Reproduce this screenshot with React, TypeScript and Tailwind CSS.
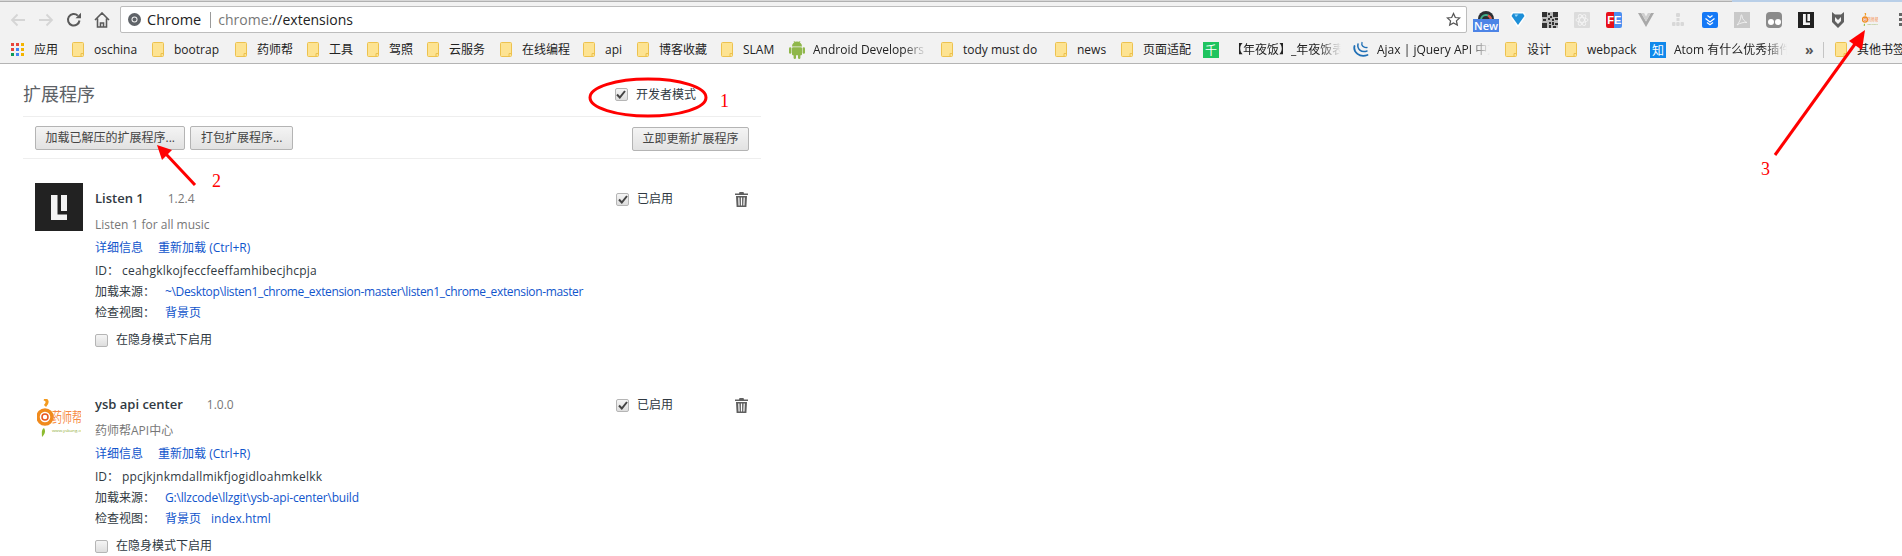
import React from 'react';

const FONT = "font-['Open_Sans','Noto_Sans_CJK_SC',sans-serif]";

function FolderIcon() {
  return (
    <svg width="12" height="15" viewBox="0 0 12 15" className="shrink-0">
      <path d="M1.5.5h9a1 1 0 0 1 1 1v12a1 1 0 0 1-1 1h-9a1 1 0 0 1-1-1v-12a1 1 0 0 1 1-1z" fill="#fde392" stroke="#edc24f" />
      <path d="M9 14.5v-3h2.5" fill="none" stroke="#edc24f" />
    </svg>
  );
}

function AppsIcon() {
  const colors = ['#e8453c', '#e8453c', '#f4b400', '#e8453c', '#4285f4', '#f4b400', '#0f9d58', '#4285f4', '#f4b400'];
  return (
    <div className="grid grid-cols-3 gap-[2px] w-[13px] shrink-0">
      {colors.map((c, i) => (
        <div key={i} className="w-[3px] h-[3px]" style={{ backgroundColor: c }} />
      ))}
    </div>
  );
}

function AndroidIcon() {
  return (
    <svg width="16" height="19" viewBox="0 0 16 19" className="shrink-0" fill="#8fb74a">
      <path d="M3 6.5a5 5 0 0 1 10 0z" />
      <rect x="3" y="7.2" width="10" height="8" rx="1" />
      <rect x="0" y="7.2" width="2.4" height="6.5" rx="1.2" />
      <rect x="13.6" y="7.2" width="2.4" height="6.5" rx="1.2" />
      <rect x="4.6" y="14" width="2.4" height="5" rx="1.2" />
      <rect x="9" y="14" width="2.4" height="5" rx="1.2" />
      <path d="M5 1l1 2M11 1l-1 2" stroke="#8fb74a" strokeWidth=".8" />
    </svg>
  );
}

function NianYeFanIcon() {
  return (
    <div className="w-4 h-4 bg-[#1fc45f] shrink-0 flex items-center justify-center text-white text-[12px] leading-none font-['Noto_Sans_CJK_SC',sans-serif]">
      千
    </div>
  );
}

function JQueryIcon() {
  return (
    <svg width="16" height="17" viewBox="0 0 16 17" className="shrink-0" fill="none" stroke="#1f6fb5" strokeLinecap="round">
      <path d="M1.5 5c-1.5 6 5 12 13 9" strokeWidth="1.8" />
      <path d="M5 3c-1 5 3 9 9 7" strokeWidth="1.5" />
      <path d="M9 1.5c-1 3 1.5 5.500 5 5" strokeWidth="1.3" />
    </svg>
  );
}

function ZhihuIcon() {
  return (
    <div className="w-4 h-4 bg-[#0f88eb] shrink-0 flex items-center justify-center text-white text-[12px] leading-none font-['Noto_Sans_CJK_SC',sans-serif]">
      知
    </div>
  );
}

const BOOKMARKS: { label: string; w: string; icon?: React.ReactNode; gap?: string; fade?: string }[] = [
  { label: '应用', w: 'w-[61px]', icon: <AppsIcon />, gap: 'gap-[10px]' },
  { label: 'oschina', w: 'w-[80px]' },
  { label: 'bootrap', w: 'w-[83px]' },
  { label: '药师帮', w: 'w-[72px]' },
  { label: '工具', w: 'w-[60px]' },
  { label: '驾照', w: 'w-[60px]' },
  { label: '云服务', w: 'w-[73px]' },
  { label: '在线编程', w: 'w-[83px]' },
  { label: 'api', w: 'w-[54px]' },
  { label: '博客收藏', w: 'w-[84px]' },
  { label: 'SLAM', w: 'w-[68px]' },
  { label: 'Android Developers', w: 'w-[152px]', icon: <AndroidIcon />, gap: 'gap-2', fade: 'w-[114px]' },
  { label: 'tody must do', w: 'w-[114px]' },
  { label: 'news', w: 'w-[66px]' },
  { label: '页面适配', w: 'w-[82px]' },
  { label: '【年夜饭】_年夜饭表单', w: 'w-[150px]', icon: <NianYeFanIcon />, gap: 'gap-3', fade: 'w-[110px]' },
  { label: 'Ajax | jQuery API 中文网', w: 'w-[152px]', icon: <JQueryIcon />, gap: 'gap-2', fade: 'w-[113px]' },
  { label: '设计', w: 'w-[60px]' },
  { label: 'webpack', w: 'w-[85px]' },
  { label: 'Atom 有什么优秀插件', w: 'w-[155px]', icon: <ZhihuIcon />, gap: 'gap-2', fade: 'w-[113px]' },
];

function Bookmark({ label, w, icon, gap, fade }: (typeof BOOKMARKS)[number]) {
  return (
    <div className={`flex items-center shrink-0 ${w} ${gap ?? 'gap-[10px]'}`}>
      {icon ?? <FolderIcon />}
      {fade ? (
        <span className={`${fade} overflow-hidden whitespace-nowrap [mask-image:linear-gradient(to_right,black_80%,transparent)]`}>{label}</span>
      ) : (
        <span className="whitespace-nowrap">{label}</span>
      )}
    </div>
  );
}

function ListenMark({ width }: { width: number }) {
  return (
    <svg width={width} viewBox="0 0 16 25" fill="#f4f4f4">
      <path d="M0 0h6.500v19.500H16V25H0z" />
      <path d="M10 0h6v16h-6z" />
    </svg>
  );
}

function YsbLogo({ width }: { width: number }) {
  return (
    <svg width={width} viewBox="0 0 44 38">
      <path d="M7 0c4 1 4 4 1 7" fill="none" stroke="#f39a1f" strokeWidth="3" />
      <circle cx="8" cy="18" r="7" fill="none" stroke="#f08a1d" strokeWidth="3.500" />
      <circle cx="8" cy="18" r="3" fill="none" stroke="#e8541e" strokeWidth="1.500" />
      <path d="M7 29c2 3 1 6-2 9 0-4-1-7 2-9z" fill="#8dbb2f" />
      <text
        transform="translate(15 23) scale(1 1.400)"
        fontSize="10"
        fill="#f68b45"
        fontFamily="'Noto Sans CJK SC', sans-serif"
      >
        药师帮
      </text>
      <text x="15" y="33" fontSize="4.300" fill="#8fae3a" fontFamily="'Open Sans', sans-serif">
        www.ysbang.cn
      </text>
    </svg>
  );
}

function ExtIcons() {
  return (
    <div className="flex items-center shrink-0 ml-[3px]">
      {/* new */}
      <div className="relative w-8 h-[27px] flex items-center justify-center">
        <svg width="16" height="16" viewBox="0 0 16 16" className="-mt-[2px]">
          <circle cx="8" cy="8" r="8" fill="#2b2f33" />
          <path d="M3 9a5 5 0 0 1 10 0" fill="none" stroke="#3fb28a" strokeWidth="2" />
          <path d="M10 4.500a5 5 0 0 1 3 4.500" fill="none" stroke="#e0574c" strokeWidth="2" />
        </svg>
        <span className="absolute left-[3px] top-[13px] w-[26px] h-[13px] bg-[#4d84e6] text-white text-[11px] leading-[13px] text-center font-semibold">New</span>
      </div>
      {/* diamond */}
      <div className="w-8 flex justify-center">
        <svg width="16" height="17" viewBox="0 0 16 17">
          <path d="M2 1h12l2 4-8 12L0 5z" fill="#fff" />
          <path d="M3 2.500h10l1.500 2.500L8 14 1.500 5z" fill="#1d8fd8" />
          <path d="M4.500 3.500h4L6 6z" fill="#9ad8f8" />
        </svg>
      </div>
      {/* qr */}
      <div className="w-8 flex justify-center">
        <svg width="16" height="16" viewBox="0 0 16 16" fill="#333" shapeRendering="crispEdges">
          <rect width="16" height="16" fill="#bbb" />
          <path d="M0 0h5v5H0zM11 0h5v5h-5zM0 11h5v5H0zM6 1h2v2H6zM8 4h2v2H8zM6 6h2v2H6zM1 7h3v2H1zM10 7h2v2h-2zM13 6h3v2h-3zM7 10h2v2H7zM10 10h2v3h-2zM13 11h3v2h-3zM7 13h2v3H7zM11 14h3v2h-3z" />
        </svg>
      </div>
      {/* react */}
      <div className="w-8 flex justify-center">
        <div className="w-4 h-4 bg-[#dcdcdc] rounded-[1px] flex items-center justify-center">
          <svg width="14" height="14" viewBox="0 0 14 14" fill="none" stroke="#f4f4f4" strokeWidth=".9">
            <ellipse cx="7" cy="7" rx="6" ry="2.400" />
            <ellipse cx="7" cy="7" rx="6" ry="2.400" transform="rotate(60 7 7)" />
            <ellipse cx="7" cy="7" rx="6" ry="2.400" transform="rotate(120 7 7)" />
          </svg>
        </div>
      </div>
      {/* fe */}
      <div className="w-8 flex justify-center">
        <div className="w-4 h-4 rounded-[2px] overflow-hidden flex text-white text-[11px] leading-4 font-bold font-['Liberation_Sans',sans-serif]">
          <span className="w-2 bg-[#e8101a] text-right">F</span>
          <span className="w-2 bg-[#4a8ef0]">E</span>
        </div>
      </div>
      {/* vue */}
      <div className="w-8 flex justify-center">
        <svg width="16" height="14" viewBox="0 0 16 14">
          <path d="M0 0h3.200L8 8.500 12.800 0H16L8 14z" fill="#a9a9a9" />
          <path d="M3.200 0h2.900L8 3.400 9.900 0h2.900L8 8.500z" fill="#cfcfcf" />
        </svg>
      </div>
      {/* tree */}
      <div className="w-8 flex justify-center">
        <svg width="12" height="14" viewBox="0 0 12 14" fill="#d8d8d8">
          <rect x="4" y="0" width="4" height="4" rx="1" />
          <rect x="4.500" y="5" width="3" height="3" />
          <rect x="0" y="9" width="3.500" height="4" rx="1" />
          <rect x="4.200" y="9" width="3.500" height="4" rx="1" />
          <rect x="8.500" y="9" width="3.500" height="4" rx="1" />
        </svg>
      </div>
      {/* pocket */}
      <div className="w-8 flex justify-center">
        <div className="w-4 h-4 bg-[#1579f6] rounded-[2px] flex items-center justify-center">
          <svg width="12" height="12" viewBox="0 0 12 12" fill="none" stroke="#fff" strokeWidth="1.200">
            <path d="M3.500 1.500L6 3.500l2.500-2M1.500 4.500L6 8l4.500-3.500M3 8.500L6 10.800 9 8.500" />
          </svg>
        </div>
      </div>
      {/* pdf */}
      <div className="w-8 flex justify-center">
        <div className="w-4 h-4 bg-[#c9c9c9] flex items-center justify-center">
          <svg width="12" height="12" viewBox="0 0 12 12" fill="none" stroke="#efefef" strokeWidth="1">
            <path d="M1 11C3 9 5 5 5 1.500c0-1 1-1 1 .500 0 3 3 6 5 6.500-3-.5-7 .5-10 2.500z" />
          </svg>
        </div>
      </div>
      {/* ghostery */}
      <div className="w-8 flex justify-center">
        <div className="w-4 h-4 bg-[#8b8b8b] rounded-[4px] flex items-end justify-center gap-[1px] pb-[3px]">
          <span className="w-[6px] h-[6px] rounded-full bg-white" />
          <span className="w-[6px] h-[6px] rounded-full bg-white" />
        </div>
      </div>
      {/* listen 1 */}
      <div className="w-8 flex justify-center">
        <div className="w-4 h-4 bg-[#222222] flex items-center justify-center">
          <ListenMark width={7} />
        </div>
      </div>
      {/* shield */}
      <div className="w-8 flex justify-center">
        <svg width="14" height="16" viewBox="0 0 14 16">
          <path d="M1 0l3 2.500h6L13 0v10l-6 6-6-6z" fill="#606060" />
          <path d="M4 5l3 3 3-3v4l-3 3-3-3z" fill="#f2f2f2" />
        </svg>
      </div>
      {/* ysb */}
      <div className="w-8 flex justify-center">
        <YsbLogo width={16} />
      </div>
      {/* chrome menu, cut by the window edge */}
      <div className="ml-[13px] w-[3px] flex flex-col gap-[2px] shrink-0">
        <span className="h-[3px] bg-[#666]" />
        <span className="h-[3px] bg-[#666]" />
        <span className="h-[3px] bg-[#666]" />
      </div>
    </div>
  );
}

function Toolbar() {
  return (
    <div className="h-[63px] bg-[#f2f2f2] border-b border-[#b4b4b4] box-content relative">
      {/* tab strip edge */}
      <div className="h-[2px] flex">
        <div className="flex-1 border-b border-[#b0b0b0] bg-[#d8d8d8]" />
        <div className="w-[170px] bg-[#b9cfe8]" />
      </div>
      <div className="h-[34px] pt-[4px] flex items-start">
        <div className="w-[120px] h-[27px] flex items-center shrink-0 pl-[10px]">
          <svg width="16" height="14" viewBox="0 0 16 14" fill="none" stroke="#d5d5d5" strokeWidth="1.800">
            <path d="M15 7H2M7.500 1.500L2 7l5.500 5.500" />
          </svg>
          <svg width="16" height="14" viewBox="0 0 16 14" fill="none" stroke="#d5d5d5" strokeWidth="1.800" className="ml-3">
            <path d="M1 7h13M8.500 1.500L14 7l-5.500 5.500" />
          </svg>
          <svg width="16" height="16" viewBox="0 0 16 16" fill="none" stroke="#5a5a5a" strokeWidth="2" className="ml-3">
            <path d="M13.500 8.500A5.800 5.800 0 1 1 11.800 3.600" />
            <path d="M9.500 6.300h5.500V.8z" fill="#5a5a5a" stroke="none" />
          </svg>
          <svg width="16" height="16" viewBox="0 0 16 16" fill="none" stroke="#5a5a5a" strokeWidth="1.600" className="ml-3">
            <path d="M1 8l7-7 7 7M3.500 6.500V15h9V6.500M6.500 15v-4h3v4" />
          </svg>
        </div>
        <div className="w-[1347px] h-[27px] bg-white border border-[#bdbdbd] rounded-[2px] flex items-center shrink-0 pl-[7px] text-[14px]">
          <svg width="13" height="13" viewBox="0 0 13 13" className="shrink-0">
            <circle cx="6.500" cy="6.500" r="6.500" fill="#5f6368" />
            <circle cx="6.500" cy="6.500" r="3" fill="#f2f2f2" />
            <circle cx="6.500" cy="6.500" r="2" fill="#5f6368" />
          </svg>
          <span className="ml-[6px] text-[#222] text-[14.500px]">Chrome</span>
          <span className="ml-[9px] w-px h-[16px] bg-[#9a9a9a]" />
          <span className="ml-[7px] text-[#777]">chrome:<span className="text-[#222]">//extensions</span></span>
          <svg width="15" height="15" viewBox="0 0 24 24" fill="none" stroke="#555" strokeWidth="2" className="ml-auto mr-[5px]">
            <path d="M12 2.500l2.900 6.300 6.900.8-5.100 4.600 1.400 6.800-6.100-3.400-6.100 3.400 1.400-6.800L2.200 9.600l6.900-.8z" />
          </svg>
        </div>
        <ExtIcons />
      </div>
      <div className={`h-[27px] flex items-center pl-[11px] text-[12px] text-[#222] overflow-hidden ${FONT}`}>
        {BOOKMARKS.map((b) => (
          <Bookmark key={b.label} {...b} />
        ))}
        <span className="w-[18px] shrink-0 text-[#555] text-[14px] leading-none font-bold">»</span>
        <span className="w-px h-4 bg-[#c4c4c4] shrink-0" />
        <span className="ml-[11px] flex items-center gap-[10px] shrink-0">
          <FolderIcon />
          <span className="whitespace-nowrap">其他书签</span>
        </span>
      </div>
    </div>
  );
}

function Check({ checked }: { checked?: boolean }) {
  return (
    <span className="w-[13px] h-[13px] rounded-[2px] border border-[#b5b5b5] bg-gradient-to-b from-[#f5f5f5] to-[#dedede] shrink-0 flex items-center justify-center">
      {checked && (
        <svg width="10" height="9" viewBox="0 0 10 9" fill="none" stroke="#444" strokeWidth="2">
          <path d="M1 4.500l2.800 3L9 1" />
        </svg>
      )}
    </span>
  );
}

function TrashIcon() {
  return (
    <svg width="13" height="15" viewBox="0 0 13 15" fill="#5f5f5f">
      <path d="M4.500 0h4l.5 1.500h4V3H0V1.500h4z" />
      <path fillRule="evenodd" d="M1 4h11l-.6 11H1.600zM3.200 5.500l.3 8h1.200l-.3-8zm2.700 0v8h1.200v-8zm2.700 0l-.3 8h1.200l.3-8z" />
    </svg>
  );
}

function Button({ children }: { children: React.ReactNode }) {
  return (
    <button className="h-6 px-[9.500px] border border-[#b4b4b4] rounded-[2px] bg-gradient-to-b from-[#f4f4f4] to-[#e2e2e2] text-[12px] text-[#444] leading-none whitespace-nowrap">
      {children}
    </button>
  );
}

function Row({ children, className }: { children: React.ReactNode; className?: string }) {
  return <div className={`h-5 flex items-center whitespace-nowrap ${className ?? ''}`}>{children}</div>;
}

interface Ext {
  name: string;
  version: string;
  desc: string;
  id: string;
  source: string;
  sourceTracking: string;
  views: string[];
  icon: React.ReactNode;
}

const EXTENSIONS: Ext[] = [
  {
    name: 'Listen 1',
    version: '1.2.4',
    desc: 'Listen 1 for all music',
    id: 'ceahgklkojfeccfeeffamhibecjhcpja',
    source: '~\\Desktop\\listen1_chrome_extension-master\\listen1_chrome_extension-master',
    sourceTracking: 'tracking-[-0.35px]',
    views: ['背景页'],
    icon: (
      <div className="w-12 h-12 bg-[#222222] flex items-center justify-center">
        <ListenMark width={16} />
      </div>
    ),
  },
  {
    name: 'ysb api center',
    version: '1.0.0',
    desc: '药师帮API中心',
    id: 'ppcjkjnkmdallmikfjogidloahmkelkk',
    source: 'G:\\llzcode\\llzgit\\ysb-api-center\\build',
    sourceTracking: 'tracking-[-0.2px]',
    views: ['背景页', 'index.html'],
    icon: (
      <div className="w-12 h-12 flex items-start justify-center pt-[10px]">
        <YsbLogo width={44} />
      </div>
    ),
  },
];

function ExtensionItem({ ext }: { ext: Ext }) {
  return (
    <div className="flex h-[206px] pl-3">
      <div className="w-[60px] shrink-0">{ext.icon}</div>
      <div className="flex-1 pt-[6px] text-[12px] text-[#303942]">
        <Row>
          <span className="text-[13px] font-semibold">{ext.name}</span>
          <span className="ml-6 text-[#777]">{ext.version}</span>
        </Row>
        <Row className="mt-[6px] text-[#777]">{ext.desc}</Row>
        <Row className="mt-[3px] text-[#15c] gap-[15px]">
          <span>详细信息</span>
          <span>重新加载 (Ctrl+R)</span>
        </Row>
        <Row className="mt-[3px]">
          <span className="w-[27px]">ID：</span>
          <span className="tracking-[0.22px]">{ext.id}</span>
        </Row>
        <Row className="mt-px">
          <span className="w-[70px]">加载来源：</span>
          <span className={`text-[#15c] ${ext.sourceTracking}`}>{ext.source}</span>
        </Row>
        <Row className="mt-px">
          <span className="w-[70px]">检查视图：</span>
          <span className="text-[#15c] flex gap-[10px]">
            {ext.views.map((v) => (
              <span key={v}>{v}</span>
            ))}
          </span>
        </Row>
        <Row className="mt-[7px] gap-2">
          <Check />
          <span>在隐身模式下启用</span>
        </Row>
      </div>
      <div className="w-[132px] shrink-0 pt-[6px] flex items-start text-[12px] text-[#303942]">
        <Row className="gap-2">
          <Check checked />
          <span>已启用</span>
        </Row>
        <div className="ml-auto mt-[3px]">
          <TrashIcon />
        </div>
      </div>
    </div>
  );
}

export default function App() {
  return (
    <div className={`relative w-[1902px] h-[556px] overflow-hidden bg-white ${FONT}`}>
      <Toolbar />
      <main className="ml-[23px] w-[738px]">
        <div className="h-[53px] border-b border-[#eeeeee] flex items-center justify-between pt-[9px] pr-[65px]">
          <h1 className="text-[18px] text-[#5c6166]">扩展程序</h1>
          <label className="flex items-center gap-2 text-[12px] text-[#303942]">
            <Check checked />
            开发者模式
          </label>
        </div>
        <div className="h-[42px] border-b border-[#eeeeee] flex items-center gap-[5px] px-3">
          <Button>加载已解压的扩展程序...</Button>
          <Button>打包扩展程序...</Button>
          <div className="ml-auto">
            <Button>立即更新扩展程序</Button>
          </div>
        </div>
        <div className="pt-[24px] pr-[13px]">
          {EXTENSIONS.map((ext) => (
            <ExtensionItem key={ext.name} ext={ext} />
          ))}
        </div>
      </main>

      {/* red annotations drawn over the screenshot */}
      <svg width="1902" height="556" className="absolute left-0 top-0 pointer-events-none" fill="none">
        <ellipse cx="648" cy="97.500" rx="58" ry="18.500" stroke="#f00" strokeWidth="3" />
        <path d="M195 185L166 154" stroke="#f00" strokeWidth="3" />
        <path d="M157 145l15 5-10 10z" fill="#f00" />
        <path d="M1775 155L1855 44" stroke="#f00" strokeWidth="3" />
        <path d="M1865 30l-3 20-13-9z" fill="#f00" />
      </svg>
      <span className="absolute left-[720px] top-[91px] text-[18px] leading-[20px] text-[#f00] font-['Liberation_Serif',serif]">1</span>
      <span className="absolute left-[212px] top-[171px] text-[18px] leading-[20px] text-[#f00] font-['Liberation_Serif',serif]">2</span>
      <span className="absolute left-[1761px] top-[159px] text-[18px] leading-[20px] text-[#f00] font-['Liberation_Serif',serif]">3</span>
    </div>
  );
}
